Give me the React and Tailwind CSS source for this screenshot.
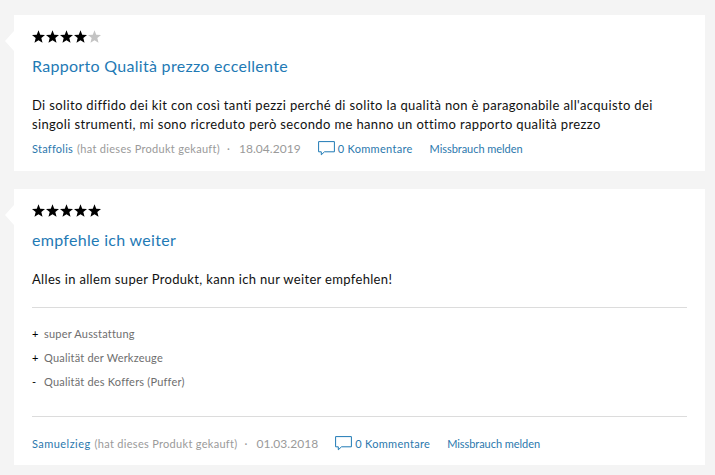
const font = { fontFamily: '"Lato", "Open Sans", sans-serif' };

function Star({ on }) {
  return (
    <svg width="13" height="13" viewBox="0 0 24 23" className={`mr-px ${on ? "fill-black" : "fill-[#c4c4c4]"}`}>
      <path d="M12 0l3.2 8.2 8.8.5-6.8 5.600 2.200 8.700L12 18.200 4.600 23l2.200-8.700L0 8.700l8.800-.5z" />
    </svg>
  );
}

function Stars({ count }) {
  return (
    <div className="flex h-[13px]">
      {[1, 2, 3, 4, 5].map((n) => (
        <Star key={n} on={n <= count} />
      ))}
    </div>
  );
}

function Meta({ name, date, nameClass }) {
  return (
    <div className="flex items-center text-[11px] leading-[14px] whitespace-nowrap">
      <span className={`text-[#2b78ad] ${nameClass}`}>{name}</span>
      <span className="ml-[4px] tracking-[0.3px] text-[#9a9a9a]">(hat dieses Produkt gekauft)</span>
      <span className="ml-[7px] text-[#9a9a9a]">·</span>
      <span className="ml-[9px] text-[12px] tracking-[0.05px] text-[#9a9a9a]">{date}</span>
      <svg width="17" height="15" viewBox="0 0 17 15" fill="none" className="ml-[17px] stroke-[#1f7ab5]">
        <path d="M.6.600h15.800v10.200H6.500l-3.200 3v-3H.6z" />
      </svg>
      <span className="ml-[3px] tracking-[0.3px] text-[#2b78ad]">0 Kommentare</span>
      <span className="ml-[17px] tracking-[-0.05px] text-[#2b78ad]">Missbrauch melden</span>
    </div>
  );
}

function Card({ children, className }) {
  return (
    <article className={`relative ml-[14px] mr-[10px] bg-white px-[18px] ${className}`}>
      <span className="absolute left-[-9px] top-[16px] h-0 w-0 border-y-[10px] border-r-[9px] border-y-transparent border-r-white" />
      {children}
    </article>
  );
}

export default function App() {
  return (
    <div style={font} className="h-[475px] w-[715px] overflow-hidden bg-[#f4f4f4] pt-[15px]">
      <Card className="h-[156px] pt-[15px]">
        <Stars count={4} />
        <h3 className="mt-[11px] text-[16px] leading-[24px] tracking-[0.3px] text-[#1f7ab5]">
          Rapporto Qualità prezzo eccellente
        </h3>
        <p className="mt-[18px] text-[13px] leading-[19px] tracking-[0.36px] text-[#111]">
          Di solito diffido dei kit con così tanti pezzi perché di solito la qualità non è paragonabile all'acquisto dei
          <br />
          singoli strumenti, mi sono ricreduto però secondo me hanno un ottimo rapporto qualità prezzo
        </p>
        <div className="mt-[7px]">
          <Meta name="Staffolis" date="18.04.2019" nameClass="tracking-[0.25px]" />
        </div>
      </Card>

      <Card className="mt-[18px] h-[276px] pt-[15px]">
        <Stars count={5} />
        <h3 className="mt-[11px] text-[16px] leading-[24px] tracking-[0.3px] text-[#1f7ab5]">empfehle ich weiter</h3>
        <p className="mt-[18px] text-[13px] leading-[19px] tracking-[0.33px] text-[#111]">
          Alles in allem super Produkt, kann ich nur weiter empfehlen!
        </p>
        <div className="mt-[18px] border-t border-[#dcdcdc] pt-[14px] pb-[22px] text-[11px] leading-[24px] tracking-[0.2px] text-[#6e6e6e]">
          {[
            ["+", "super Ausstattung"],
            ["+", "Qualität der Werkzeuge"],
            ["-", "Qualität des Koffers (Puffer)"],
          ].map(([sign, text]) => (
            <div key={text} className="flex">
              <span className="w-[12px] text-black">{sign}</span>
              <span>{text}</span>
            </div>
          ))}
        </div>
        <div className="border-t border-[#dcdcdc] pt-[19px]">
          <Meta name="Samuelzieg" date="01.03.2018" nameClass="tracking-[0.45px]" />
        </div>
      </Card>
    </div>
  );
}
